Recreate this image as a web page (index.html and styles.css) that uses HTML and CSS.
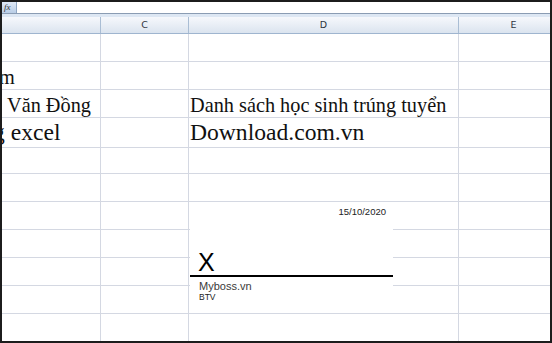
FILE: index.html
```html
<!DOCTYPE html>
<html lang="vi">
<head>
    <meta charset="UTF-8">
    <meta name="viewport" content="width=device-width, initial-scale=1.0">
    <title>Danh sách học sinh trúng tuyển</title>
    <link rel="stylesheet" href="styles.css">
</head>
<body>
    <div class="sheet">
        <div class="formula-bar">
            <span class="fx-btn">fx</span>
        </div>
        <div class="bar-gap"></div>

        <div class="col-head">
            <div class="hcell"></div>
            <div class="hcell">C</div>
            <div class="hcell">D</div>
            <div class="hcell">E</div>
        </div>

        <div class="grid">
            <!-- row 1 -->
            <div class="cell"></div><div class="cell"></div><div class="cell"></div><div class="cell"></div>
            <!-- row 2 -->
            <div class="cell"><span class="txt cut-m">m</span></div><div class="cell"></div><div class="cell"></div><div class="cell"></div>
            <!-- row 3 -->
            <div class="cell"><span class="txt name">Văn Đồng</span></div><div class="cell"></div>
            <div class="cell"><span class="txt title">Danh sách học sinh trúng tuyển</span></div><div class="cell"></div>
            <!-- row 4 -->
            <div class="cell tall"><span class="txt big cut-g">g excel</span></div><div class="cell tall"></div>
            <div class="cell tall"><span class="txt big site">Download.com.vn</span></div><div class="cell tall"></div>
            <!-- rest -->
            <div class="cell"></div><div class="cell"></div><div class="cell"></div><div class="cell"></div>
            <div class="cell"></div><div class="cell"></div><div class="cell"></div><div class="cell"></div>
            <div class="cell"></div><div class="cell"></div><div class="cell"></div><div class="cell"></div>
            <div class="cell"></div><div class="cell"></div><div class="cell"></div><div class="cell"></div>
            <div class="cell"></div><div class="cell"></div><div class="cell"></div><div class="cell"></div>
            <div class="cell"></div><div class="cell"></div><div class="cell"></div><div class="cell"></div>
            <div class="cell"></div><div class="cell"></div><div class="cell"></div><div class="cell"></div>
        </div>

        <!-- signature picture floating over the sheet -->
        <div class="signature">
            <div class="sig-date">15/10/2020</div>
            <div class="sig-x">X</div>
            <div class="sig-line"></div>
            <div class="sig-name">Myboss.vn</div>
            <div class="sig-role">BTV</div>
        </div>
    </div>
</body>
</html>
```

FILE: styles.css
```css
:root {
    --grid-line: #d4d8e2;
    --head-line: #9fb5cf;
    --frame: #1c1c1c;
}

* {
    margin: 0;
    padding: 0;
    box-sizing: border-box;
}

body {
    background: white;
}

.sheet {
    position: relative;
    width: 552px;
    height: 343px;
    border: 2px solid var(--frame);
    overflow: hidden;
    background: white;
}

.formula-bar {
    height: 12px;
    border-bottom: 1px solid #8a9cb3;
    display: flex;
}

.fx-btn {
    width: 15px;
    height: 11px;
    background: linear-gradient(#dfe9f6, #b9cde6);
    border-right: 1px solid #8ea5c2;
    font-family: "Liberation Serif", serif;
    font-style: italic;
    font-size: 9px;
    line-height: 11px;
    color: #333;
    padding-left: 2px;
}

.bar-gap {
    height: 3px;
    background: #dde7f3;
}

.col-head {
    display: grid;
    grid-template-columns: 99px 88px 270px 110px;
    height: 17px;
    border-bottom: 1px solid var(--head-line);
    background: linear-gradient(#f6f8fc, #dbe4ef);
}

.hcell {
    border-right: 1px solid #a9bdd4;
    font-family: "DejaVu Sans", sans-serif;
    font-size: 9.5px;
    line-height: 16px;
    text-align: center;
    color: #2d3540;
}

.grid {
    display: grid;
    grid-template-columns: 99px 88px 270px 110px;
    grid-auto-rows: 28px;
}

.cell {
    border-right: 1px solid var(--grid-line);
    border-bottom: 1px solid var(--grid-line);
    display: flex;
    align-items: flex-end;
    padding-bottom: 2px;
    white-space: nowrap;
    min-width: 0;
}

.cell.tall {
    height: 30px;
    padding-bottom: 3px;
}

.txt {
    font-family: "Liberation Serif", "Times New Roman", serif;
    font-size: 20.3px;
    line-height: 20px;
    color: #111;
}

.txt.big {
    font-size: 23.6px;
    line-height: 23px;
}

.cut-m {
    margin-left: -3px;
}

.name {
    margin-left: 5px;
}

.cut-g {
    margin-left: -9px;
}

.title,
.site {
    margin-left: 1px;
}

.signature {
    position: absolute;
    left: 188px;
    top: 202px;
    width: 203px;
    height: 100px;
    background: white;
    display: flex;
    flex-direction: column;
    font-family: "Liberation Sans", Arial, sans-serif;
}

.signature > div {
    flex-shrink: 0;
}

.sig-date {
    text-align: right;
    padding: 3px 7px 0 0;
    font-size: 9.5px;
    line-height: 10px;
    color: #222;
}

.sig-x {
    margin-top: 33px;
    padding-left: 8px;
    font-size: 25px;
    line-height: 25px;
    color: #000;
}

.sig-line {
    height: 2px;
    background: #000;
}

.sig-name {
    margin-top: 4px;
    padding-left: 9px;
    font-size: 11px;
    line-height: 11px;
    color: #3a3a3a;
}

.sig-role {
    margin-top: 1px;
    padding-left: 9px;
    font-size: 8.5px;
    line-height: 9px;
    color: #222;
}
```
